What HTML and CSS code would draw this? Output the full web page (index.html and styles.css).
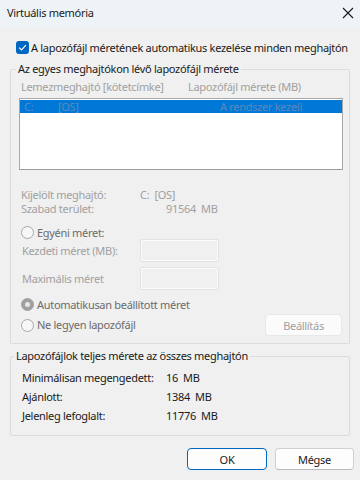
FILE: index.html
```html
<!DOCTYPE html>
<html lang="hu">
<head>
  <meta charset="UTF-8">
  <meta name="viewport" content="width=device-width, initial-scale=1.0">
  <title>Virtuális memória</title>
  <link rel="stylesheet" href="styles.css">
</head>
<body>
  <div class="titlebar">
    <span class="title">Virtuális memória</span>
    <svg class="close" width="12" height="12" viewBox="0 0 12 12">
      <path d="M1 1 L11 11 M11 1 L1 11" stroke="#1a1a1a" stroke-width="1.1" fill="none"/>
    </svg>
  </div>

  <div class="dialog">
    <label class="auto-row">
      <span class="checkbox">
        <svg width="9" height="9" viewBox="0 0 9 9">
          <path d="M1.2 4.6 L3.5 6.9 L7.9 2.2" stroke="#fff" stroke-width="1.2" fill="none"/>
        </svg>
      </span>
      A lapozófájl méretének automatikus kezelése minden meghajtón
    </label>

    <div class="group drives">
      <div class="group-title">Az egyes meghajtókon lévő lapozófájl mérete</div>

      <div class="list-head">
        <span class="col-drive">Lemezmeghajtó [kötetcímke]</span>
        <span>Lapozófájl mérete (MB)</span>
      </div>
      <div class="listbox">
        <div class="list-row selected">
          <span class="cell-letter">C:</span>
          <span class="cell-label">[OS]</span>
          <span>A rendszer kezeli</span>
        </div>
      </div>

      <div class="info-row first">
        <span class="info-label">Kijelölt meghajtó:</span>
        <span>C:&nbsp;&nbsp;[OS]</span>
      </div>
      <div class="info-row">
        <span class="info-label">Szabad terület:</span>
        <span class="free">91564&nbsp;&nbsp;MB</span>
      </div>

      <div class="radio-row custom">
        <span class="radio"></span>
        Egyéni méret:
      </div>
      <div class="field-row">
        <span class="field-label">Kezdeti méret (MB):</span>
        <span class="field"></span>
      </div>
      <div class="field-row">
        <span class="field-label">Maximális méret</span>
        <span class="field"></span>
      </div>

      <div class="radio-row auto">
        <span class="radio checked"></span>
        Automatikusan beállított méret
      </div>
      <div class="radio-row none">
        <span class="radio"></span>
        Ne legyen lapozófájl
        <button class="btn set" disabled>Beállítás</button>
      </div>
    </div>

    <div class="group totals">
      <div class="group-title">Lapozófájlok teljes mérete az összes meghajtón</div>
      <div class="total-row">
        <span class="total-label">Minimálisan megengedett:</span>
        <span>16&nbsp;&nbsp;MB</span>
      </div>
      <div class="total-row">
        <span class="total-label">Ajánlott:</span>
        <span>1384&nbsp;&nbsp;MB</span>
      </div>
      <div class="total-row">
        <span class="total-label">Jelenleg lefoglalt:</span>
        <span>11776&nbsp;&nbsp;MB</span>
      </div>
    </div>

    <div class="buttons">
      <button class="btn ok">OK</button>
      <button class="btn">Mégse</button>
    </div>
  </div>
</body>
</html>
```

FILE: styles.css
```css
body {
  margin: 0;
  background-color: #f0f0f0;
  color: #1a1a1a;
  font-family: "Noto Sans", sans-serif;
  font-size: 11px;
  letter-spacing: -0.3px;
  line-height: 14px;
  white-space: nowrap;
}
.titlebar {
  height: 26px;
  background-color: #eef3f8;
  display: flex;
  align-items: center;
  justify-content: space-between;
  padding: 0 6px 0 7px;
}
.close {
  display: block;
}
.dialog {
  padding: 0 10px;
}
.auto-row {
  display: flex;
  align-items: center;
  height: 13px;
  margin-top: 15px;
  padding-left: 6px;
  gap: 2px;
}
.checkbox {
  width: 13px;
  height: 13px;
  border-radius: 3px;
  background-color: #0067c0;
  display: flex;
  align-items: center;
  justify-content: center;
}
.checkbox svg {
  display: block;
}
.group {
  border: 1px solid #dcdcdc;
  border-radius: 2px;
  padding: 0 6px 7px 8px;
}
.group-title {
  width: fit-content;
  margin: -8px 0 0 -3px;
  padding: 0 2px;
  background-color: #f0f0f0;
  height: 14px;
}
.totals .group-title {
  margin-left: -5px;
}
.drives {
  margin-top: 15px;
}
.list-head {
  display: flex;
  color: #a0a0a0;
  height: 14px;
  margin-top: 4px;
  padding-left: 2px;
}
.col-drive {
  width: 167px;
}
.listbox {
  margin-top: 4px;
  height: 72px;
  box-sizing: border-box;
  border: 1px solid #a8a8a8;
  border-bottom-color: #9a9a9a;
  background-color: #fff;
  padding-top: 1px;
}
.list-row {
  display: flex;
  height: 13px;
  line-height: 13px;
  padding-left: 4px;
}
.selected {
  background-color: #0078d7;
  color: #5f88bd;
}
.cell-letter {
  width: 34px;
}
.cell-label {
  width: 162px;
}
.info-row {
  display: flex;
  color: #a0a0a0;
  height: 14px;
  padding-left: 2px;
}
.info-row.first {
  margin-top: 18px;
}
.info-label {
  width: 119px;
}
.free {
  padding-left: 26px;
}
.radio-row {
  display: flex;
  align-items: center;
  gap: 3px;
  color: #6b6b6b;
  padding-left: 2px;
}
.radio-row.custom {
  margin-top: 10px;
  height: 13px;
}
.radio {
  width: 11px;
  height: 11px;
  border: 1px solid #a8a8a8;
  border-radius: 50%;
  background-color: #f7f7f7;
  position: relative;
}
.radio.checked {
  background-color: #a0a0a0;
  border-color: #a0a0a0;
}
.radio.checked::after {
  content: "";
  position: absolute;
  left: 3px;
  top: 3px;
  width: 5px;
  height: 5px;
  border-radius: 50%;
  background-color: #e8e8e8;
}
.field-row {
  display: flex;
  align-items: center;
  color: #a0a0a0;
  padding-left: 3px;
  height: 23px;
}
.field-row + .field-row {
  margin-top: 5px;
}
.field-label {
  width: 118px;
}
.field {
  width: 77px;
  height: 21px;
  border: 1px solid #e2e2e2;
  border-radius: 2px;
  box-shadow: inset 0 0 0 1px #fbfbfb;
}
.radio-row.auto {
  margin-top: 8px;
  height: 13px;
}
.radio-row.none {
  margin-top: 3px;
  height: 22px;
}
.btn {
  font-family: "Noto Sans", sans-serif;
  font-size: 11px;
  letter-spacing: -0.3px;
  color: #1a1a1a;
  width: 79px;
  height: 22px;
  padding: 0;
  background-color: #fdfdfd;
  border: 1px solid #d0d0d0;
  border-bottom-color: #bcbcbc;
  border-radius: 4px;
}
.btn.set {
  margin-left: auto;
  width: 77px;
  color: #a0a0a0;
  background-color: #fbfbfb;
  border-color: #e8e8e8;
  margin-right: 1px;
}
.totals {
  margin-top: 12px;
  padding-bottom: 10px;
}
.total-row {
  display: flex;
  height: 19px;
  align-items: center;
  padding-left: 3px;
}
.totals .group-title + .total-row {
  margin-top: 5px;
}
.total-label {
  width: 144px;
}
.buttons {
  display: flex;
  justify-content: flex-end;
  gap: 8px;
  margin-top: 12px;
  margin-right: -4px;
}
.btn.ok {
  width: 80px;
  border-color: #0067c0;
}
```
